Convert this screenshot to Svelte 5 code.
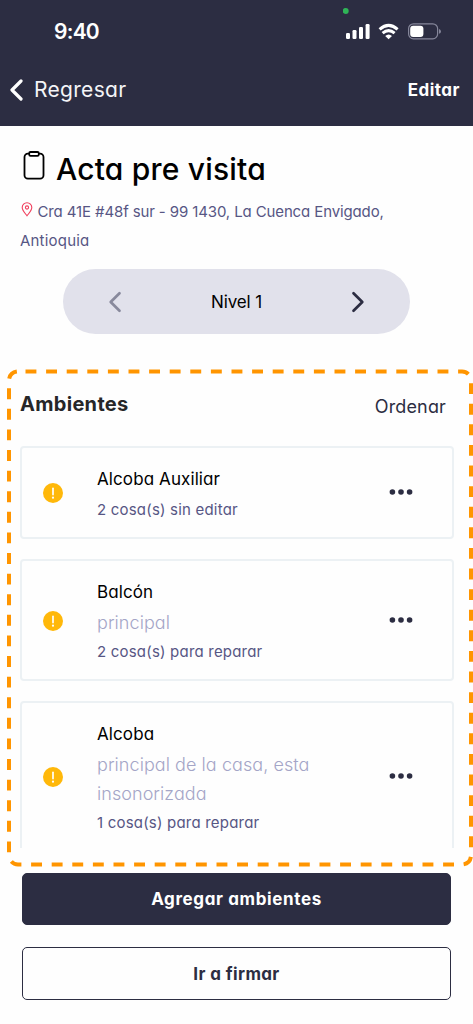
<script>
  const rooms = [
    { name: 'Alcoba Auxiliar', notes: [], detail: '2 cosa(s) sin editar' },
    { name: 'Balcón', notes: ['principal'], detail: '2 cosa(s) para reparar' },
    { name: 'Alcoba', notes: ['principal de la casa, esta', 'insonorizada'], detail: '1 cosa(s) para reparar' }
  ];
</script>

<div class="screen">
  <header>
    <div class="status">
      <span class="time">9:40</span>
      <svg class="indicators" width="98" height="36" viewBox="343 4 98 36">
        <circle cx="345.7" cy="11" r="3" fill="#2fb457" />
        <g fill="#fff">
          <rect x="346" y="33" width="4" height="6" rx="1.2" />
          <rect x="352.5" y="30" width="4" height="9" rx="1.2" />
          <rect x="359" y="27" width="4" height="12" rx="1.2" />
          <rect x="365.6" y="24" width="4" height="15" rx="1.2" />
          <path d="M385.2 36 Q388.6 33 392 36 L388.6 39.3 Z" />
        </g>
        <g fill="none" stroke="#fff" stroke-width="3">
          <path d="M379.6 29.4 Q388.6 21.4 397.6 29.4" />
          <path d="M382.6 33.2 Q388.6 28 394.6 33.2" />
        </g>
        <rect x="408.6" y="23.8" width="29" height="15" rx="4.8" fill="none" stroke="#85869a" stroke-width="1.2" />
        <rect x="410.2" y="25.7" width="13.2" height="11.2" rx="3" fill="#fff" />
        <path d="M439 29 Q441 29.8 441 31.4 T439 33.8 Z" fill="#85869a" />
      </svg>
    </div>
    <nav>
      <div class="back">
        <svg width="14" height="24" viewBox="0 0 14 24"><path d="M12 3 L3 12 L12 21" fill="none" stroke="#fff" stroke-width="3.2" stroke-linecap="round" stroke-linejoin="round" /></svg>
        <span>Regresar</span>
      </div>
      <span class="edit">Editar</span>
    </nav>
  </header>

  <section class="intro">
    <div class="title">
      <svg width="22" height="30" viewBox="0 0 22 30">
        <rect x="1.5" y="2.6" width="19" height="25" rx="3.4" fill="none" stroke="#000" stroke-width="1.8" />
        <rect x="6.2" y="1" width="9.6" height="3.8" rx="1.3" fill="#fff" stroke="#000" stroke-width="1.8" />
      </svg>
      <h1>Acta pre visita</h1>
    </div>
    <div class="address">
      <svg width="12" height="15" viewBox="0 0 12 15" fill="none" stroke="#f03e5c" stroke-width="1.1">
        <path d="M6 13.8 C4.2 11.3 1.2 8.5 1.2 5.6 A4.8 4.8 0 0 1 10.8 5.6 C10.8 8.5 7.8 11.3 6 13.8 Z" />
        <circle cx="6" cy="5.5" r="1.6" />
      </svg>
      <span class="street">Cra 41E #48f sur - 99 1430, La Cuenca Envigado,</span>
    </div>
    <div class="address city">Antioquia</div>
  </section>

  <div class="level">
    <svg width="14" height="22" viewBox="0 0 14 22"><path d="M11.5 2.2 L2.7 11 L11.5 19.8" fill="none" stroke="#88899c" stroke-width="2.7" stroke-linecap="round" stroke-linejoin="round" /></svg>
    <span>Nivel 1</span>
    <svg width="14" height="22" viewBox="0 0 14 22"><path d="M2.5 2.2 L11.3 11 L2.5 19.8" fill="none" stroke="#2c2d42" stroke-width="2.7" stroke-linecap="round" stroke-linejoin="round" /></svg>
  </div>

  <section class="rooms">
    <div class="heading">
      <h2>Ambientes</h2>
      <span class="sort">Ordenar</span>
    </div>
    <div class="list">
      {#each rooms as room}
        <article class="card">
          <svg class="alert" width="20" height="20" viewBox="0 0 20 20">
            <circle cx="10" cy="10" r="10" fill="#ffb80a" />
            <path d="M10 5.3 V11.6" stroke="#fff" stroke-width="1.7" stroke-linecap="round" />
            <circle cx="10" cy="14.7" r="1.1" fill="#fff" />
          </svg>
          <div class="info">
            <div class="name">{room.name}</div>
            {#each room.notes as note}
              <div class="note">{note}</div>
            {/each}
            <div class="detail">{room.detail}</div>
          </div>
          <svg class="more" width="24" height="6" viewBox="0 0 24 6" fill="#2c2d42">
            <circle cx="3.4" cy="3" r="2.8" /><circle cx="12" cy="3" r="2.8" /><circle cx="20.6" cy="3" r="2.8" />
          </svg>
        </article>
      {/each}
    </div>
  </section>

  <footer>
    <button class="primary">Agregar ambientes</button>
    <button class="outline">Ir a firmar</button>
  </footer>

  <svg class="frame" width="473" height="504" viewBox="0 366 473 504">
    <path d="M25.5 371.5 H462 A9 9 0 0 1 471 380.5 V855.5 A9 9 0 0 1 462 864.5 H18 A9 9 0 0 1 9 855.5 V380.5 A9 9 0 0 1 18 371.5 H25.5" fill="none" stroke="#ff9500" stroke-width="4" stroke-dasharray="10.9 9.7" />
  </svg>
</div>

<style>
  :global(body) { margin: 0; background: #fefefe; }
  .screen {
    position: relative;
    width: 473px;
    height: 1024px;
    overflow: hidden;
    box-sizing: border-box;
    background: #fefefe;
    font-family: Inter, "Open Sans", sans-serif;
    font-feature-settings: "cv11";
    color: #000;
    white-space: nowrap;
  }
  svg { display: block; flex: none; }
  h1, h2 { margin: 0; }
  header { height: 125.5px; background: #2c2d42; color: #fff; overflow: hidden; }
  .status { display: flex; justify-content: space-between; padding: 4px 32px 0 54px; height: 50px; }
  .time { font-size: 21px; font-weight: 600; line-height: 28px; margin-top: 13.5px; letter-spacing: -.75px; }
  nav { display: flex; justify-content: space-between; align-items: center; height: 71px; padding: 0 13px 0 9px; }
  .back { display: flex; align-items: center; gap: 11px; font-size: 21px; letter-spacing: .3px; color: #f4f4f7; }
  .edit { font-size: 17px; font-weight: 700; letter-spacing: .5px; }
  .intro { padding: 25px 20px 0; }
  .title { display: flex; gap: 11px; padding-left: 3px; height: 46px; }
  .title h1 { font-size: 30px; font-weight: 500; line-height: 36px; letter-spacing: .2px; }
  .address { display: flex; align-items: center; height: 29px; font-size: 15px; color: #575684; }
  .address svg { margin: -4px 4.5px 0 1px; }
  .street { letter-spacing: -.12px; }
  .city { letter-spacing: .2px; }
  .level {
    display: flex; align-items: center; justify-content: space-between;
    width: 347px; height: 65px; margin: 14.5px 0 0 63px; padding: 0 45px;
    box-sizing: border-box; border-radius: 33px; background: #e1e1eb;
    font-size: 17px;
  }
  .level span { letter-spacing: -.15px; }
  .rooms { padding: 55px 19px 0 20px; }
  .heading { display: flex; justify-content: space-between; height: 57px; }
  h2 { font-size: 20px; font-weight: 700; line-height: 31px; letter-spacing: .3px; color: #262628; }
  .sort { font-size: 18px; line-height: 36px; letter-spacing: .15px; margin-right: 8px; color: #2c2d42; }
  .list { height: 402px; overflow: hidden; }
  .card {
    display: flex; align-items: center; box-sizing: border-box; width: 434px;
    margin-bottom: 20px; padding: 15px 39px 13.5px 21px;
    border: 2px solid #ecf1f4; border-radius: 4px;
  }
  .info { flex: 1; padding-left: 34px; }
  .name { font-size: 17px; line-height: 32px; margin-bottom: .5px; letter-spacing: .1px; }
  .note { font-size: 18px; font-weight: 300; line-height: 29px; letter-spacing: .06px; color: #a4a5c7; position: relative; top: -1px; }
  .detail { font-size: 15px; line-height: 28px; letter-spacing: .2px; color: #575684; }
  .more { margin-top: -2px; }
  footer { display: flex; flex-direction: column; gap: 22px; padding: 24.5px 22px 0; }
  button {
    box-sizing: border-box; height: 52.5px; padding: 1px 0 0; border: 1.5px solid #2c2d42; border-radius: 5px;
    width: 429px; font: 700 17px Inter, sans-serif; font-feature-settings: "cv11";
  }
  .primary { background: #2c2d42; color: #fff; letter-spacing: .62px; }
  .outline { background: #fefefe; color: #2c2d42; letter-spacing: .38px; }
  .frame { position: absolute; left: 0; top: 366px; pointer-events: none; }
</style>
